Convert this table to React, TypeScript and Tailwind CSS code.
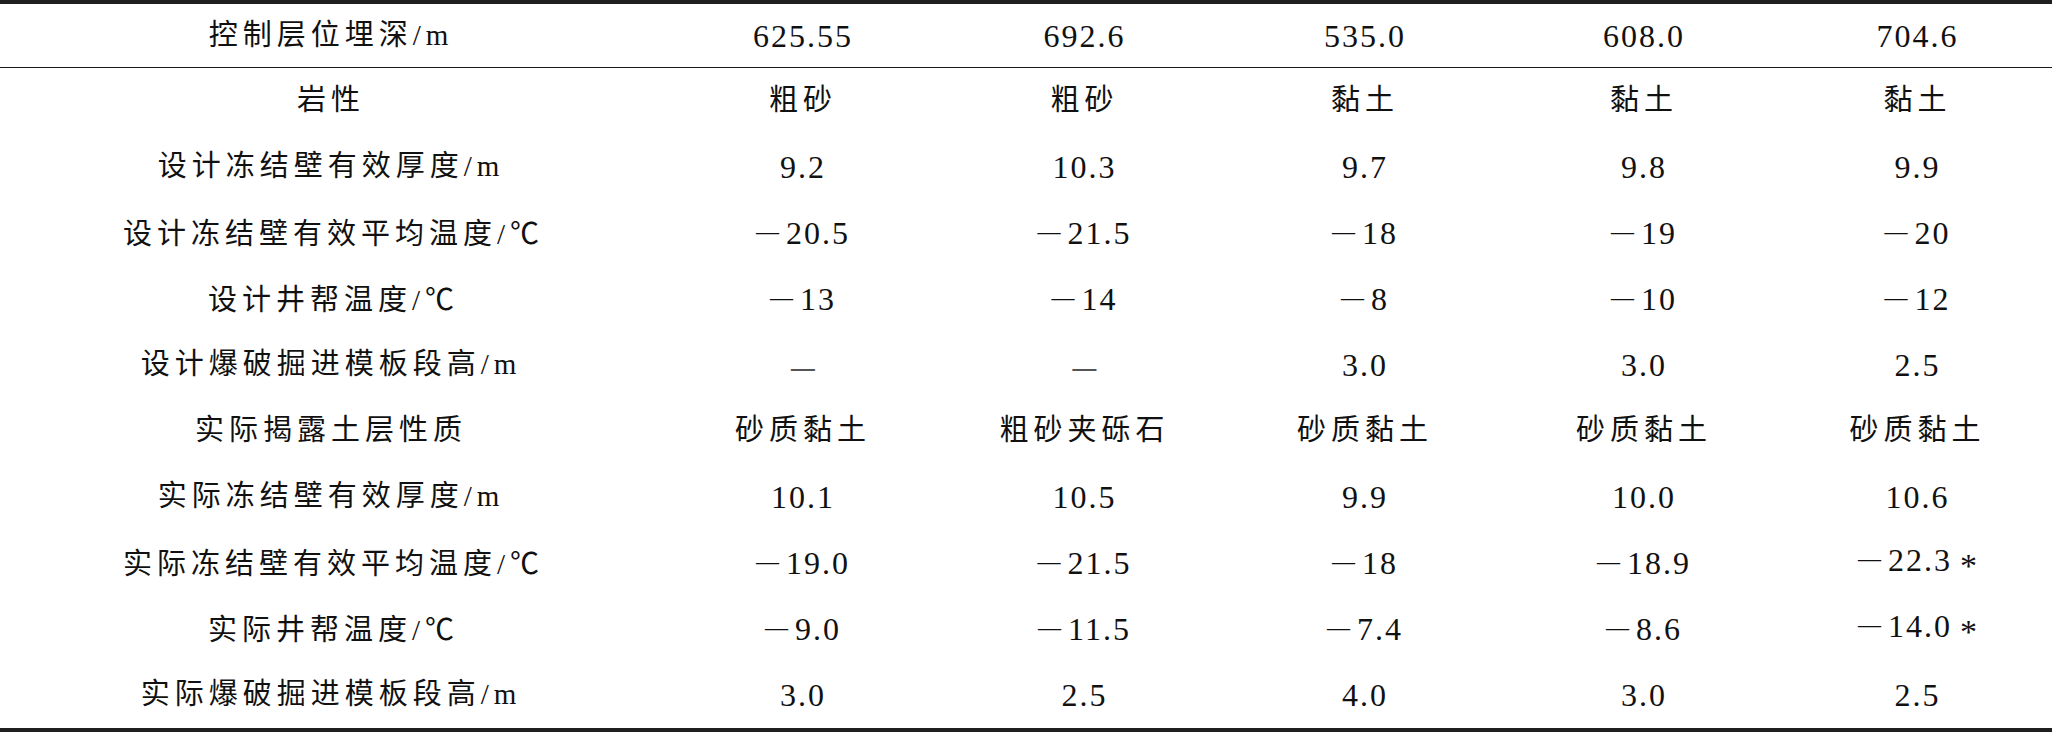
import React from "react";

const cols = ["625.55", "692.6", "535.0", "608.0", "704.6"];

const rows: [string, string[]][] = [
  ["岩性", ["粗砂", "粗砂", "黏土", "黏土", "黏土"]],
  ["设计冻结壁有效厚度/m", ["9.2", "10.3", "9.7", "9.8", "9.9"]],
  ["设计冻结壁有效平均温度/℃", ["-20.5", "-21.5", "-18", "-19", "-20"]],
  ["设计井帮温度/℃", ["-13", "-14", "-8", "-10", "-12"]],
  ["设计爆破掘进模板段高/m", ["—", "—", "3.0", "3.0", "2.5"]],
  ["实际揭露土层性质", ["砂质黏土", "粗砂夹砾石", "砂质黏土", "砂质黏土", "砂质黏土"]],
  ["实际冻结壁有效厚度/m", ["10.1", "10.5", "9.9", "10.0", "10.6"]],
  ["实际冻结壁有效平均温度/℃", ["-19.0", "-21.5", "-18", "-18.9", "-22.3*"]],
  ["实际井帮温度/℃", ["-9.0", "-11.5", "-7.4", "-8.6", "-14.0*"]],
  ["实际爆破掘进模板段高/m", ["3.0", "2.5", "4.0", "3.0", "2.5"]],
];

const grid = "grid grid-cols-[662px_282px_281px_280px_278px_1fr]";
const cjk = "font-['Liberation_Serif','Noto_Sans_CJK_SC',serif] text-[29px] tracking-[5px]";

// label text, with the ℃ sign drawn full width from the CJK font
function Label({ text }: { text: string }) {
  const parts = text.split("℃");
  return (
    <span className={cjk}>
      {parts[0]}
      {parts.length > 1 && (
        <span className="font-['Noto_Sans_CJK_SC',sans-serif] tracking-normal">℃</span>
      )}
    </span>
  );
}

function Value({ v }: { v: string }) {
  if (v === "—") {
    return <span className="font-['Noto_Sans_CJK_SC',sans-serif] text-[30px] text-[#555]">—</span>;
  }
  if (!/^[-0-9]/.test(v)) {
    return <span className={cjk}>{v}</span>;
  }
  const neg = v.startsWith("-");
  const star = v.endsWith("*");
  const core = v.replace(/^-/, "").replace(/\*$/, "");
  return (
    <span className="font-['Liberation_Serif',serif] text-[32px] tracking-[2px]">
      {neg && <span className="text-[23px] tracking-normal mr-[7px] align-[5px]">—</span>}
      {core}
      {star && <span className="ml-[8px] align-[-6px] tracking-normal text-[34px]">*</span>}
    </span>
  );
}

export default function App() {
  return (
    <div className="w-[2052px] h-[733px] bg-white text-[#111] overflow-hidden">
      <div className="h-[4px] bg-[#1f1f1f]" />
      {/* header */}
      <div className={`${grid} h-[64px] border-b border-[#1a1a1a]`}>
        <div className="flex items-center justify-center">
          <Label text="控制层位埋深/m" />
        </div>
        {cols.map((c) => (
          <div key={c} className="flex items-center justify-center">
            <Value v={c} />
          </div>
        ))}
      </div>
      {/* body */}
      {rows.map(([label, vals]) => (
        <div key={label} className={`${grid} h-[66px]`}>
          <div className="flex items-center justify-center">
            <Label text={label} />
          </div>
          {vals.map((v, i) => (
            <div key={i} className="flex items-center justify-center">
              <Value v={v} />
            </div>
          ))}
        </div>
      ))}
      <div className="h-[4px] bg-[#1f1f1f]" />
    </div>
  );
}
